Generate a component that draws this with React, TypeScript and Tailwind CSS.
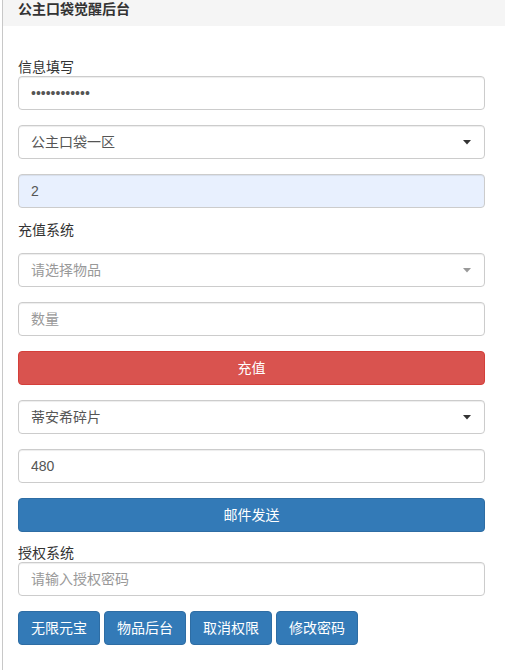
import { ReactNode } from 'react'

const font = { fontFamily: '"Liberation Sans", "Noto Sans CJK SC", sans-serif' }

const control =
  'block w-[467px] h-[34px] px-3 border border-[#ccc] rounded-[4px] text-[14px] text-[#555] shadow-[inset_0_1px_1px_rgba(0,0,0,0.075)] outline-none placeholder:text-[#999]'

function Label({ children, className = '' }: { children: ReactNode; className?: string }) {
  return <div className={`h-[17px] leading-[17px] text-[14px] text-[#333] ${className}`}>{children}</div>
}

function FakeSelect({ text, placeholder = false, className = '' }: { text: string; placeholder?: boolean; className?: string }) {
  return (
    <div className={`${control} flex items-center justify-between bg-white ${className}`}>
      <span className={placeholder ? 'text-[#999]' : 'text-[#555]'}>{text}</span>
      <svg width="8" height="5" viewBox="0 0 8 5" className="mr-[1px]">
        <path d="M0 0 L8 0 L4 4.5 Z" fill={placeholder ? '#999' : '#333'} />
      </svg>
    </div>
  )
}

export default function App() {
  const smallButtons = ['无限元宝', '物品后台', '取消权限', '修改密码']

  return (
    <div className="w-[505px] h-[670px] bg-white overflow-hidden" style={font}>
      <div className="ml-[2px] h-full border-l border-[#c8c8c8]">
        {/* Heading */}
        <div className="h-[26px] bg-[#f5f5f5] pl-[15px]">
          <div className="leading-[18px] text-[14px] font-bold text-[#333]">公主口袋觉醒后台</div>
        </div>

        {/* Body */}
        <div className="pl-[15px] pt-[33px]">
          <Label>信息填写</Label>
          <input type="password" readOnly value="123456789012" className={`${control} bg-white`} />

          <FakeSelect text="公主口袋一区" className="mt-[15px]" />

          <input readOnly value="2" className={`${control} mt-[15px] bg-[#e8f0fe] text-[#222]`} />

          <Label className="mt-[14px] mb-[14px]">充值系统</Label>
          <FakeSelect text="请选择物品" placeholder />

          <input placeholder="数量" className={`${control} mt-[15px] bg-white`} />

          <button className="mt-[15px] block w-[467px] h-[34px] rounded-[4px] bg-[#d9534f] border border-[#d43f3a] text-white text-[14px]">
            充值
          </button>

          <FakeSelect text="蒂安希碎片" className="mt-[15px]" />

          <input readOnly value="480" className={`${control} mt-[15px] bg-white`} />

          <button className="mt-[15px] block w-[467px] h-[34px] rounded-[4px] bg-[#337ab7] border border-[#2e6da4] text-white text-[14px]">
            邮件发送
          </button>

          <Label className="mt-[13px]">授权系统</Label>
          <input placeholder="请输入授权密码" className={`${control} bg-white`} />

          <div className="mt-[15px] flex gap-[4px]">
            {smallButtons.map((b) => (
              <button
                key={b}
                className="w-[82px] h-[34px] rounded-[4px] bg-[#337ab7] border border-[#2e6da4] text-white text-[14px]"
              >
                {b}
              </button>
            ))}
          </div>
        </div>
      </div>
    </div>
  )
}
